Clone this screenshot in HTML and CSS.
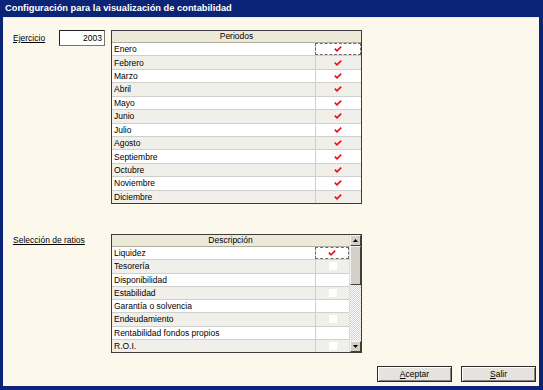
FILE: index.html
```html
<!DOCTYPE html>
<html>
<head>
    <meta charset="UTF-8">
    <title>Configuración para la visualización de contabilidad</title>
    <link rel="stylesheet" href="styles.css">
</head>
<body>
    <div class="window">
        <div class="titlebar">Configuración para la visualización de contabilidad</div>

        <div class="client">
            <!-- Ejercicio + periodos -->
            <div class="field-row">
                <label class="field-label">Ejercicio</label>
                <div class="year-box">2003</div>
                <div class="grid grid-periods">
                    <div class="grid-main">
                        <div class="grid-head">Periodos</div>
                        <div class="grid-row"><span class="cell-name">Enero</span><span class="cell-check focus"><svg class="tick" viewBox="0 0 8 6"><path d="M0.8 2.6 L3 4.8 L7.2 0.6"/></svg></span></div>
                        <div class="grid-row alt"><span class="cell-name">Febrero</span><span class="cell-check"><svg class="tick" viewBox="0 0 8 6"><path d="M0.8 2.6 L3 4.8 L7.2 0.6"/></svg></span></div>
                        <div class="grid-row"><span class="cell-name">Marzo</span><span class="cell-check"><svg class="tick" viewBox="0 0 8 6"><path d="M0.8 2.6 L3 4.8 L7.2 0.6"/></svg></span></div>
                        <div class="grid-row alt"><span class="cell-name">Abril</span><span class="cell-check"><svg class="tick" viewBox="0 0 8 6"><path d="M0.8 2.6 L3 4.8 L7.2 0.6"/></svg></span></div>
                        <div class="grid-row"><span class="cell-name">Mayo</span><span class="cell-check"><svg class="tick" viewBox="0 0 8 6"><path d="M0.8 2.6 L3 4.8 L7.2 0.6"/></svg></span></div>
                        <div class="grid-row alt"><span class="cell-name">Junio</span><span class="cell-check"><svg class="tick" viewBox="0 0 8 6"><path d="M0.8 2.6 L3 4.8 L7.2 0.6"/></svg></span></div>
                        <div class="grid-row"><span class="cell-name">Julio</span><span class="cell-check"><svg class="tick" viewBox="0 0 8 6"><path d="M0.8 2.6 L3 4.8 L7.2 0.6"/></svg></span></div>
                        <div class="grid-row alt"><span class="cell-name">Agosto</span><span class="cell-check"><svg class="tick" viewBox="0 0 8 6"><path d="M0.8 2.6 L3 4.8 L7.2 0.6"/></svg></span></div>
                        <div class="grid-row"><span class="cell-name">Septiembre</span><span class="cell-check"><svg class="tick" viewBox="0 0 8 6"><path d="M0.8 2.6 L3 4.8 L7.2 0.6"/></svg></span></div>
                        <div class="grid-row alt"><span class="cell-name">Octubre</span><span class="cell-check"><svg class="tick" viewBox="0 0 8 6"><path d="M0.8 2.6 L3 4.8 L7.2 0.6"/></svg></span></div>
                        <div class="grid-row"><span class="cell-name">Noviembre</span><span class="cell-check"><svg class="tick" viewBox="0 0 8 6"><path d="M0.8 2.6 L3 4.8 L7.2 0.6"/></svg></span></div>
                        <div class="grid-row alt"><span class="cell-name">Diciembre</span><span class="cell-check"><svg class="tick" viewBox="0 0 8 6"><path d="M0.8 2.6 L3 4.8 L7.2 0.6"/></svg></span></div>
                    </div>
                </div>
            </div>

            <!-- Selección de ratios -->
            <div class="field-row ratios-row">
                <label class="field-label wide">Selección de ratios</label>
                <div class="grid grid-ratios">
                    <div class="grid-main">
                        <div class="grid-head">Descripción</div>
                        <div class="grid-row"><span class="cell-name">Liquidez</span><span class="cell-check focus"><svg class="tick" viewBox="0 0 8 6"><path d="M0.8 2.6 L3 4.8 L7.2 0.6"/></svg></span></div>
                        <div class="grid-row alt"><span class="cell-name">Tesorería</span><span class="cell-check"><span class="box"></span></span></div>
                        <div class="grid-row"><span class="cell-name">Disponibilidad</span><span class="cell-check"><span class="box"></span></span></div>
                        <div class="grid-row alt"><span class="cell-name">Estabilidad</span><span class="cell-check"><span class="box"></span></span></div>
                        <div class="grid-row"><span class="cell-name">Garantía o solvencia</span><span class="cell-check"><span class="box"></span></span></div>
                        <div class="grid-row alt"><span class="cell-name">Endeudamiento</span><span class="cell-check"><span class="box"></span></span></div>
                        <div class="grid-row"><span class="cell-name">Rentabilidad fondos propios</span><span class="cell-check"><span class="box"></span></span></div>
                        <div class="grid-row alt"><span class="cell-name">R.O.I.</span><span class="cell-check"><span class="box"></span></span></div>
                    </div>
                    <div class="scrollbar">
                        <div class="sb-btn"><svg viewBox="0 0 5 3"><path d="M2.5 0 L5 3 L0 3 Z"/></svg></div>
                        <div class="sb-thumb"></div>
                        <div class="sb-track"></div>
                        <div class="sb-btn"><svg viewBox="0 0 5 3"><path d="M0 0 L5 0 L2.5 3 Z"/></svg></div>
                    </div>
                </div>
            </div>

            <div class="actions">
                <button class="btn"><u>A</u>ceptar</button>
                <button class="btn"><u>S</u>alir</button>
            </div>
        </div>
    </div>
</body>
</html>
```

FILE: styles.css
```css
* { box-sizing: border-box; }
body { margin: 0; background: #0c2475; font-family: "Liberation Sans", Arial, sans-serif; font-size: 8.5px; color: #000; }

.window { width: 543px; height: 390px; border: solid #0c2475; border-width: 0 4px 4px 3px; display: flex; flex-direction: column; }
.titlebar { height: 17px; line-height: 17px; padding-left: 2px; color: #fff; font-weight: bold; font-size: 9.3px; }
.client { flex: 1; display: flex; flex-direction: column; background: #fdf8ec; border-top: 1px solid #e8ecf4; border-left: 1px solid #f4f4f4; padding: 12px 3px 4px 9px; }

.field-row { display: flex; align-items: flex-start; }
.ratios-row { margin-top: 30px; }
.field-label { width: 46px; height: 16px; line-height: 16px; text-decoration: underline; }
.field-label.wide { width: 98px; line-height: 13px; }
.year-box { width: 46px; height: 16px; line-height: 14px; margin-right: 6px; padding-right: 2px; text-align: right; background: #fff; border: 1px solid #222; border-right-color: #777; border-bottom-color: #777; }

/* grids */
.grid { width: 251px; display: flex; border: 1px solid #3c3c3c; background: #fff; }
.grid-periods { height: 174px; }
.grid-ratios { height: 119px; }
.grid-main { flex: 1; display: flex; flex-direction: column; }
.grid-head { height: 12px; line-height: 11px; text-align: center; background: #ece9d8; border-bottom: 1px solid #b0ad9e; }
.grid-row { flex: 1; display: flex; border-bottom: 1px solid #cfcfcb; }
.grid-row:last-child { border-bottom: none; }
.grid-row.alt { background: #f1efe9; }
.cell-name { flex: 1; padding-left: 2px; display: flex; align-items: center; }
.cell-check { width: 46px; border-left: 1px solid #cfcfcb; display: flex; align-items: center; justify-content: center; }
.grid-ratios .cell-check { width: 34px; }
.cell-check.focus { background: #fff; outline: 1px dashed #6a6a6a; outline-offset: -1px; }
.tick { width: 8px; height: 6px; margin-left: -2px; }
.tick path { fill: none; stroke: #e8101a; stroke-width: 1.6; }
.box { width: 8px; height: 8px; background: #fff; }

/* scrollbar */
.scrollbar { width: 12px; display: flex; flex-direction: column; border-left: 1px solid #e0ddd4; }
.sb-btn { height: 11px; background: #d4d0c8; border: 1px solid; border-color: #f4f4f4 #404040 #404040 #f4f4f4; display: flex; align-items: center; justify-content: center; }
.sb-btn svg { width: 5px; height: 3px; }
.sb-thumb { height: 39px; background: #d4d0c8; border: 1px solid; border-color: #f4f4f4 #404040 #404040 #f4f4f4; }
.sb-track { flex: 1; background: repeating-conic-gradient(#fff 0 25%, #d4d0c8 0 50%) 0 0 / 2px 2px; }

/* buttons */
.actions { margin-top: auto; display: flex; justify-content: flex-end; gap: 9px; }
.btn { width: 75px; height: 16px; padding: 0; font: inherit; background: #e4e3df; border: 1px solid #2a2a2a; box-shadow: inset 1px 1px #fff, inset -1px -1px #808080; }
```
